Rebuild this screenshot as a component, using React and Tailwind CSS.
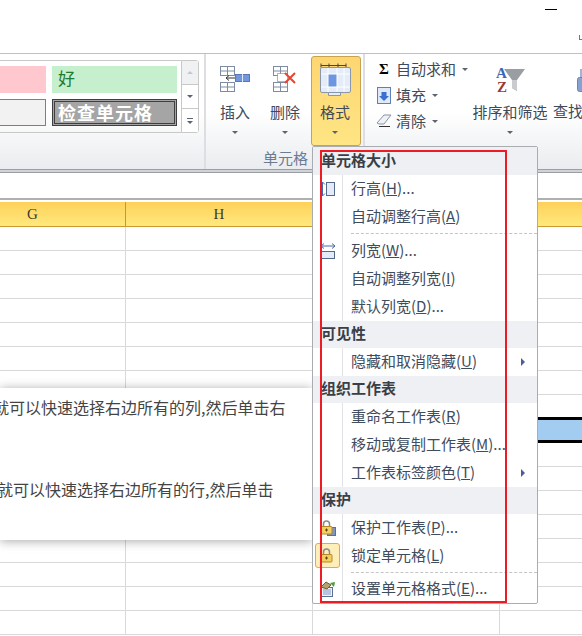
import React from 'react';

const Caret = () => (
    <div className="w-0 h-0 border-x-[3px] border-t-[3px] border-x-transparent border-t-[#5b6470]"></div>
);

const MiniTable = ({ x, y }) => (
    <g stroke="#7d8ca3" fill="#fff">
        <rect x={x + 0.5} y={y + 0.5} width="14" height="9" />
        <path d={`M${x} ${y + 5}h15M${x + 7.5} ${y}v10`} fill="none" />
    </g>
);

const InsertIcon = () => (
    <svg width="30" height="27" viewBox="0 0 30 27">
        <MiniTable x={0} y={0} />
        <MiniTable x={0} y={16} />
        <rect x="15.5" y="8.5" width="14" height="7" fill="#7397dd" stroke="#5a78b5" />
        <path d="M22.5 8v8" stroke="#dfe8f8" />
        <path d="M6 12h9M6 12l3-2.5M6 12l3 2.5" stroke="#333" fill="none" />
    </svg>
);

const DeleteIcon = () => (
    <svg width="30" height="27" viewBox="0 0 30 27">
        <MiniTable x={3} y={0} />
        <MiniTable x={3} y={16} />
        <rect x="7.5" y="7.5" width="10" height="8" fill="#fff" stroke="#3f6fc4" strokeDasharray="1 1" />
        <path d="M15 7l10 10M25 7L15 17" stroke="#e8432e" strokeWidth="2" />
    </svg>
);

const FormatIcon = () => (
    <svg width="32" height="34" viewBox="0 0 32 34">
        <path d="M1 3.5h25M1 1.5v4M9 1.5v4M18 1.5v4M26 1.5v4" stroke="#444" fill="none" />
        <path d="M8.5 30.5v3h12v-3" fill="#e6edf8" stroke="#8a97aa" />
        <rect x="0.5" y="5.5" width="30" height="25" rx="1.5" fill="#e4ecf8" stroke="#8a97aa" />
        <rect x="8" y="12" width="9" height="13" fill="#6e95e0" />
        <path d="M1 12h29M1 25h29M8 6v24M17 6v24M24 6v24" stroke="#fff" />
    </svg>
);

const FillIcon = () => (
    <svg width="14" height="17" viewBox="0 0 14 17">
        <rect x="0.5" y="0.5" width="13" height="16" fill="#dfe9f8" stroke="#5d80b8" />
        <path d="M4.5 5h5v4h2.5L7 14 2 9h2.5z" fill="#3b6fd1" />
    </svg>
);

const EraserIcon = () => (
    <svg width="16" height="14" viewBox="0 0 16 14">
        <path d="M1 9l7-8h7l-7 9H3z" fill="#eef1f5" stroke="#8a94a3" />
        <path d="M3 12.5h11" stroke="#333" />
    </svg>
);

const SortIcon = () => (
    <svg width="32" height="30" viewBox="0 0 32 30">
        <path d="M10 5h21l-8 11v11l-5-3v-8z" fill="#9a9da1" />
        <path d="M18 16l5 0v11l-5-3z" fill="#c9cbce" />
        <text x="2" y="14" fontSize="15" fontWeight="700" fontFamily="Liberation Serif" fill="#3f66b5">A</text>
        <text x="3" y="28" fontSize="15" fontWeight="700" fontFamily="Liberation Serif" fill="#9b3a35">Z</text>
    </svg>
);

const FindIcon = () => (
    <svg width="10" height="24" viewBox="0 0 10 24">
        <rect x="3" y="0" width="4" height="8" fill="#9fb4d8" />
        <rect x="0.5" y="8.5" width="9" height="14" rx="2" fill="#86a2d2" stroke="#6c84ae" />
    </svg>
);

const RowHeightIcon = () => (
    <svg width="15" height="17" viewBox="0 0 15 17">
        <rect x="6.5" y="1.5" width="8" height="13" fill="#e3ebf8" stroke="#56698a" />
        <path d="M2.5 1v14M0 3.5L2.5 1 5 3.5M0 12.5L2.5 15 5 12.5" stroke="#4668b0" fill="none" />
    </svg>
);

const ColWidthIcon = () => (
    <svg width="16" height="16" viewBox="0 0 16 16">
        <path d="M1 3h14M1 3l3-2.5M1 3l3 2.5M15 3l-3-2.5M15 3l-3 2.5" stroke="#4668b0" fill="none" />
        <rect x="1.5" y="8.5" width="13" height="7" fill="#e3ebf8" stroke="#56698a" />
    </svg>
);

const LockIcon = ({ sheet }) => (
    <svg width="16" height="16" viewBox="0 0 16 16">
        {sheet && <rect x="7.5" y="7.5" width="8" height="8" fill="#7f95c4" stroke="#5b6f9c" />}
        <path d="M3.5 7V4a3 3 0 016 0v3" stroke="#8b8b8b" strokeWidth="1.5" fill="none" />
        <rect x="1" y="6.5" width="11" height="7.5" rx="1" fill="#f3cf62" stroke="#b78a26" />
        <path d="M6.5 8.5v3M5 10h3" stroke="#5b4310" />
    </svg>
);

const CellFormatIcon = () => (
    <svg width="16" height="16" viewBox="0 0 16 16">
        <rect x="1.5" y="6.5" width="11" height="9" fill="#eef3fb" stroke="#5c6f90" />
        <path d="M3 9h8M3 11h8M3 13h8" stroke="#7f95c4" />
        <path d="M1 6l5-5 5 3-4 4z" fill="#b3a36a" stroke="#6c6232" />
        <path d="M10 2l5-1-1 5z" fill="#4f9a3e" />
    </svg>
);

const LargeButton = ({ icon, label, active, wide }) => (
    <div
        className={`${wide ? 'w-[80px]' : 'w-[50px]'} h-[90px] mt-[2px] flex flex-col items-center pt-[5px] rounded-[3px] border ${
            active ? 'bg-gradient-to-b from-[#fdd672] to-[#ffe584] border-[#c9a14f]' : 'border-transparent'
        }`}
    >
        <div className="h-[34px] flex items-center justify-center">{icon}</div>
        <div className={`h-[20px] mt-[6px] leading-[20px] text-[15px] text-[#3f4a59] whitespace-nowrap ${active ? 'pr-[2px]' : ''}`}>{label}</div>
        <div className={`mt-[9px] ${active ? 'pr-[2px]' : ''}`}><Caret /></div>
    </div>
);

const SmallButton = ({ icon, label }) => (
    <div className="h-[26px] flex items-center">
        <div className="w-[16px] flex justify-center">{icon}</div>
        <span className="ml-[4px] text-[15px] text-[#3f4a59]">{label}</span>
        <div className="ml-[6px]"><Caret /></div>
    </div>
);

const Ribbon = () => (
    <div className="h-[116px] flex border-t border-[#c0c0c0] bg-gradient-to-b from-white via-white to-[#eaecef]">
        <div className="w-[206px] shrink-0 border-r-2 border-[#dcdee2]">
            <div className="flex mt-[6px]">
                <div className="w-[181px] h-[73px] border-y border-[#c8c8c8] pt-[5px] grid grid-cols-[46px_125px] gap-x-[6px] gap-y-[6px] content-start">
                    <div className="h-[27px] bg-[#ffc7ce]"></div>
                    <div className="h-[27px] bg-[#c6efce] pl-[6px] text-[17px] leading-[24px] text-[#1f7a33]">好</div>
                    <div className="h-[27px] bg-[#f2f2f2] border-y border-r border-[#7f7f7f]"></div>
                    <div className="h-[27px] bg-[#a5a5a5] border-[3px] border-double border-[#3f3f3f] pl-[3px] text-[18px] leading-[20px] font-bold tracking-[1px] text-white whitespace-nowrap">检查单元格</div>
                </div>
                <div className="w-[18px] h-[73px] flex flex-col border border-[#c8c8c8] rounded-r-[3px]">
                    <div className="h-[24px] bg-[#f0f1f3] border-b border-[#c8c8c8] flex items-center justify-center">
                        <div className="w-0 h-0 border-x-[3px] border-b-[3px] border-x-transparent border-b-[#c4c7cb]"></div>
                    </div>
                    <div className="h-[24px] bg-white border-b border-[#c8c8c8] flex items-center justify-center"><Caret /></div>
                    <div className="flex-1 bg-white flex flex-col items-center justify-center gap-[2px]">
                        <div className="w-[6px] h-px bg-[#5b6470]"></div>
                        <Caret />
                    </div>
                </div>
            </div>
        </div>

        <div className="w-[159px] shrink-0 border-r-2 border-[#dcdee2] flex flex-col">
            <div className="flex pl-[4px]">
                <LargeButton icon={<InsertIcon />} label="插入" />
                <LargeButton icon={<DeleteIcon />} label="删除" />
                <div className="ml-[1px]">
                    <LargeButton icon={<FormatIcon />} label="格式" active />
                </div>
            </div>
            <div className="h-[20px] mt-[2px] ml-[57px] leading-[20px] text-[15px] text-[#6b7b92]">单元格</div>
        </div>

        <div className="flex pl-[11px] whitespace-nowrap">
            <div className="w-[94px] shrink-0 mt-[2px]">
                <SmallButton icon={<span className="font-['Liberation_Serif',serif] font-bold text-[15px] text-black">Σ</span>} label="自动求和" />
                <SmallButton icon={<FillIcon />} label="填充" />
                <SmallButton icon={<EraserIcon />} label="清除" />
            </div>
            <LargeButton icon={<SortIcon />} label="排序和筛选" wide />
            <div className="ml-[3px] w-[40px] mt-[2px] flex flex-col pt-[13px]">
                <div className="h-[26px] pl-[24px]"><FindIcon /></div>
                <div className="h-[20px] mt-[6px] leading-[20px] text-[15px] text-[#3f4a59]">查找</div>
            </div>
        </div>
    </div>
);

const ColumnHeader = () => (
    <div className="h-[25px] grid grid-cols-[126px_187px_187px_1fr] bg-gradient-to-b from-[#fdd15a] to-[#ffe97c] border-b border-[#c89a30] font-['Liberation_Serif',serif] text-[15px] text-[#3b3b2e]">
        <div className="border-r border-[#c8982e] flex items-center justify-center pr-[60px]">G</div>
        <div className="border-r border-[#c8982e] flex items-center justify-center">H</div>
        <div className="border-r border-[#c8982e]"></div>
        <div></div>
    </div>
);

const rows = Array.from({ length: 17 }, (_, i) => i);

const Grid = () => (
    <div>
        {rows.map((i) => (
            <div key={i} className="h-[24px] grid grid-cols-[126px_187px_187px_1fr] border-b border-[#d9d9d9]">
                <div className="border-r border-[#d9d9d9]"></div>
                <div className="border-r border-[#d9d9d9]"></div>
                {i === 8 ? (
                    <div className="col-span-2 h-[26px] -mt-[2px] bg-[#a3cdf0] border-y-[3px] border-black"></div>
                ) : (
                    <>
                        <div className="border-r border-[#d9d9d9]"></div>
                        <div></div>
                    </>
                )}
            </div>
        ))}
    </div>
);

const MenuHeader = ({ title, tall }) => (
    <div className={`${tall ? 'h-[28px]' : 'h-[27px]'} bg-[#eff0f4] pl-[8px] pb-[2px] flex items-center text-[15px] font-bold text-[#3a3f47]`}>
        {title}
    </div>
);

const MenuItem = ({ text, hotkey, dots, icon, submenu, checked }) => (
    <div className="h-[28px] flex">
        <div className="w-[30px] shrink-0 border-r border-[#e2e3e6] relative flex items-center justify-center">
            {checked && <div className="absolute left-[2px] top-[1px] w-[25px] h-[25px] rounded-[3px] bg-[#fdeeba] border border-[#f2a33c]"></div>}
            <div className="relative flex">{icon}</div>
        </div>
        <div className="flex-1 pl-[8px] pb-[2px] flex items-center text-[15px] text-[#3f4c5e] whitespace-nowrap overflow-hidden">
            <span>{text}(<u>{hotkey}</u>){dots}</span>
        </div>
        {submenu && (
            <div className="w-[16px] shrink-0 flex items-center">
                <div className="w-0 h-0 border-y-[4px] border-l-[4px] border-y-transparent border-l-[#4a5f9a]"></div>
            </div>
        )}
    </div>
);

const MenuSeparator = ({ tall }) => (
    <div className={`${tall ? 'h-[6px]' : 'h-[5px]'} flex`}>
        <div className="w-[30px] border-r border-[#e2e3e6]"></div>
        <div className="flex-1 ml-[8px] mt-[2px] h-0 border-t border-dashed border-[#c5c5c5]"></div>
    </div>
);

const FormatMenu = () => (
    <div className="absolute left-[312px] top-[146px] w-[226px] h-[458px] bg-white border border-[#a9adb2] rounded-[2px] flex flex-col">
        <MenuHeader title="单元格大小" tall />
        <MenuItem text="行高" hotkey="H" dots="..." icon={<RowHeightIcon />} />
        <MenuItem text="自动调整行高" hotkey="A" />
        <MenuSeparator tall />
        <MenuItem text="列宽" hotkey="W" dots="..." icon={<ColWidthIcon />} />
        <MenuItem text="自动调整列宽" hotkey="I" />
        <MenuItem text="默认列宽" hotkey="D" dots="..." />
        <MenuHeader title="可见性" />
        <MenuItem text="隐藏和取消隐藏" hotkey="U" submenu />
        <MenuHeader title="组织工作表" />
        <MenuItem text="重命名工作表" hotkey="R" />
        <MenuItem text="移动或复制工作表" hotkey="M" dots="..." />
        <MenuItem text="工作表标签颜色" hotkey="T" submenu />
        <MenuHeader title="保护" />
        <MenuItem text="保护工作表" hotkey="P" dots="..." icon={<LockIcon sheet />} />
        <MenuItem text="锁定单元格" hotkey="L" icon={<LockIcon />} checked />
        <MenuSeparator />
        <MenuItem text="设置单元格格式" hotkey="E" dots="..." icon={<CellFormatIcon />} />
    </div>
);

const NoteCard = () => (
    <div className="absolute left-0 top-[388px] w-[312px] h-[152px] bg-white shadow-[0_1px_10px_rgba(0,0,0,0.35)] pt-[7px] text-[16px] leading-[24px] text-[#444] whitespace-nowrap overflow-hidden">
        <p className="-ml-[7px]">就可以快速选择右边所有的列,然后单击右</p>
        <p className="-ml-[3px] mt-[58px]">就可以快速选择右边所有的行,然后单击</p>
    </div>
);

const App = () => {
    return (
        <div className="relative w-[582px] h-[636px] overflow-hidden bg-white font-['Noto_Sans_CJK_SC','Liberation_Sans',sans-serif]">
            <div className="h-[53px] overflow-hidden">
                <div className="ml-[545px] mt-[9px] w-[12px] h-px bg-black"></div>
                <div className="ml-[579px] mt-[25px] w-[3px] h-[5px] border-l border-b border-[#777]"></div>
            </div>
            <Ribbon />
            <div className="h-[4px] bg-[#d0d3d7] border-y border-[#9b9fa4]"></div>
            <div className="h-[25px]"></div>
            <div className="h-[4px] border-t-2 border-[#b0b0b0]"></div>
            <ColumnHeader />
            <Grid />
            <NoteCard />
            <FormatMenu />
            <div className="absolute left-[320px] top-[150px] w-[187px] h-[453px] border-2 border-[#ed1c24]"></div>
        </div>
    );
};

export default App;
